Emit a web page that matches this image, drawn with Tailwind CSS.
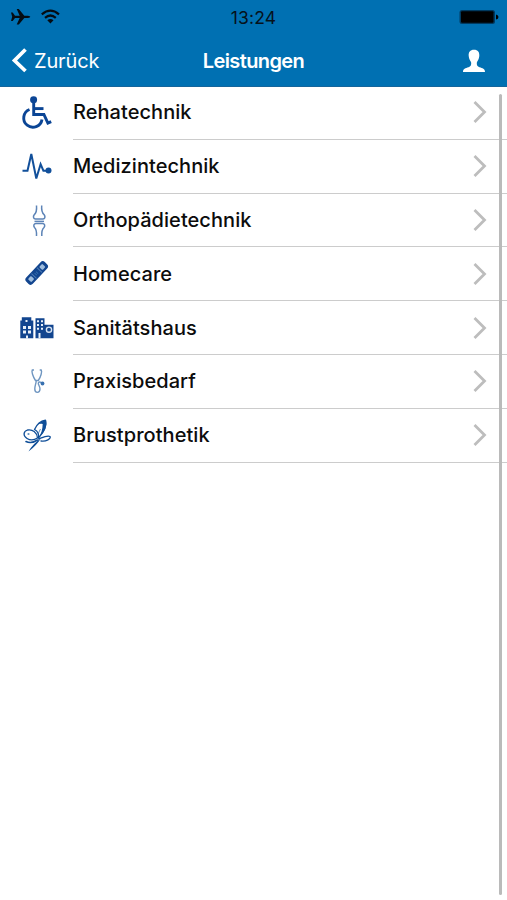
<!DOCTYPE html>
<html lang="de">
<head>
<meta charset="utf-8">
<title>Leistungen</title>
<script src="https://cdn.jsdelivr.net/npm/@tailwindcss/browser@4"></script>
</head>
<body class="relative h-[900px] w-[507px] overflow-hidden bg-white font-['Inter','Liberation_Sans',sans-serif] text-[#111]">
<header class="h-[87px] border-b border-[#15659b] bg-[#0070b2]">
  <div class="grid h-[34px] grid-cols-3 items-center">
    <svg class="h-[34px] w-[70px]" viewBox="0 0 70 34">
      <path d="M11 12.5h1.700l2.300 3.200h4.700L16.700 9h2.100l5.500 6.700h3.700q2.300.3 2.300 1.100t-2.300 1.100h-3.700l-5.500 6.600h-2.100l3-6.600h-4.700L12.700 21H11l1.200-4.200z" fill="#050c12"/>
      <g fill="none" stroke="#050c12" stroke-width="2.200"><path d="M41.800 14.300q8.600-7.200 17.200 0"/><path d="M45 17.800q5.400-4.600 10.800 0"/></g>
      <path d="M47.300 20.200q3.100-2.300 6.200 0L50.400 23.500z" fill="#050c12"/>
    </svg>
    <span class="pt-px text-center text-[17.500px] leading-[33px] tracking-[0.2px] text-[#06121b]">13:24</span>
    <svg class="h-[34px] w-[50px] justify-self-end" viewBox="457 0 50 34"><rect x="459.500" y="10" width="35.500" height="14" rx="2.500" fill="#003a60"/><rect x="461" y="11.300" width="32.500" height="11.500" rx="1"/><path d="M496 14.500q2.500.5 2.500 2.500t-2.500 2.500z"/></svg>
  </div>
  <div class="grid h-[52px] grid-cols-3 items-center text-white">
    <div class="flex h-[52px] items-center">
      <svg class="h-[52px] w-[34px]" viewBox="0 34 34 52"><path d="M25.500 49.500L14.500 60.500L25.500 71" fill="none" stroke="#fff" stroke-width="3.700"/></svg>
      <span class="pt-[2px] text-[20px] tracking-[-0.15px]">Zurück</span>
    </div>
    <span class="pt-[2px] text-center text-[20px] font-semibold tracking-[-0.6px]">Leistungen</span>
    <svg class="h-[52px] w-[50px] justify-self-end" viewBox="457 34 50 52"><path d="M474 49.700c4 0 5.600 2.500 5.300 6.200-.2 2.900-1.600 4.700-2.400 6.400-.5 2.800.4 4 2.600 5 3 1 5.500 1.500 5.500 4.700h-22c0-3.200 2.500-3.700 5.500-4.700 2.200-1 3.100-2.200 2.600-5-.8-1.700-2.200-3.500-2.400-6.400-.3-3.700 1.300-6.200 5.300-6.200z" fill="#fff"/></svg>
  </div>
</header>
<ul class="-mt-px text-[20px] text-[#0c0c0c]">
  <li class="flex h-[53.8px] items-center">
    <svg class="h-[53.8px] w-[73px] shrink-0" viewBox="0 0 73 53.8"><g fill="none" stroke="#0b4595" stroke-width="2.900"><path d="M33.700 16v12.500h10.200l4 8.600 3.300-1.500"/><path d="M34 22.600h9.500"/><path d="M29.500 23.500A9.200 9.200 0 1 0 42 33.500"/></g><circle cx="33.600" cy="13.700" r="3.500" fill="#0b4595"/></svg>
    <div class="flex h-full flex-1 items-center justify-between border-b-[1.500px] border-[#ccc] pr-[19px]"><span class="font-medium tracking-[0.05px]">Rehatechnik</span><svg class="h-6 w-4" viewBox="0 0 16 24"><path d="M2.500 2L12.500 12L2.500 22" fill="none" stroke="#bdbdbd" stroke-width="2.800"/></svg></div>
  </li>
  <li class="flex h-[53.8px] items-center">
    <svg class="h-[53.8px] w-[73px] shrink-0" viewBox="0 0 73 53.8"><path d="M22.500 30.700h5L31.300 14l5 24.500 4.300-14.300 2.800 6.500h5" fill="none" stroke="#12509b" stroke-width="2"/><circle cx="48.500" cy="30.500" r="3" fill="#12509b"/></svg>
    <div class="flex h-full flex-1 items-center justify-between border-b-[1.500px] border-[#ccc] pr-[19px]"><span class="font-medium tracking-[0.05px]">Medizintechnik</span><svg class="h-6 w-4" viewBox="0 0 16 24"><path d="M2.500 2L12.500 12L2.500 22" fill="none" stroke="#bdbdbd" stroke-width="2.800"/></svg></div>
  </li>
  <li class="flex h-[53.8px] items-center">
    <svg class="h-[53.8px] w-[73px] shrink-0" viewBox="0 0 73 53.8"><g fill="none" stroke="#5d84b7" stroke-width="1.500"><path d="M36.500 11.500c.4 4.500.3 7-2.300 9.300-1.500 2-.6 4.400 1.500 4.200h7c2.100.2 3-2.200 1.500-4.200-2.600-2.300-2.900-4.800-2.500-9.300"/><path d="M34.500 27.400h9.500"/><path d="M36.500 42c.3-4.500.2-6.500-2-8.500-1.500-2-.5-4 1.500-4h6.500c2 0 3 2 1.500 4-2.200 2-2.500 4-2.200 8.500"/></g></svg>
    <div class="flex h-full flex-1 items-center justify-between border-b-[1.500px] border-[#ccc] pr-[19px]"><span class="font-medium tracking-[0.05px]">Orthopädietechnik</span><svg class="h-6 w-4" viewBox="0 0 16 24"><path d="M2.500 2L12.500 12L2.500 22" fill="none" stroke="#bdbdbd" stroke-width="2.800"/></svg></div>
  </li>
  <li class="flex h-[53.8px] items-center">
    <svg class="h-[53.8px] w-[73px] shrink-0" viewBox="0 0 73 53.8"><g transform="translate(36.700 26) rotate(-47)"><rect x="-13.500" y="-4.500" width="27" height="9" rx="3" fill="#12458f"/><rect x="-10.500" y="-2.300" width="4.500" height="4.600" rx="1" fill="#9dbbdc"/><rect x="6" y="-2.300" width="4.500" height="4.600" rx="1" fill="#9dbbdc"/><path d="M-4-3.500v7M4-3.500v7" stroke="#4f7db4" stroke-width="1"/><path d="M-2 0h4" stroke="#326aab" stroke-width="3" stroke-dasharray="1 1"/></g></svg>
    <div class="flex h-full flex-1 items-center justify-between border-b-[1.500px] border-[#ccc] pr-[19px]"><span class="font-medium tracking-[0.05px]">Homecare</span><svg class="h-6 w-4" viewBox="0 0 16 24"><path d="M2.500 2L12.500 12L2.500 22" fill="none" stroke="#bdbdbd" stroke-width="2.800"/></svg></div>
  </li>
  <li class="flex h-[53.8px] items-center">
    <svg class="h-[53.8px] w-[73px] shrink-0" viewBox="0 0 73 53.8"><path d="M20.300 37.300V19.500h1.500v-3.300h9.500v3.300h2v17.800zM35.500 37.300V17.300h9v6.500h9v13.500z" fill="#12458f"/><g fill="#e8f0f9"><path d="M25.500 19h2v2h-2zM23 25h3v3h-3zM28 25h3v3h-3zM23 29.500h3v3h-3zM28 29.500h3v3h-3zM26 34.500h2v3h-2z"/><path d="M37 19.300h2v2h-2zM41 19.300h2v2h-2zM37 23h2v2h-2zM41 23h2v2h-2zM37 26.700h2v2h-2zM41 26.700h2v2h-2zM38.500 32h2v5.300h-2z"/></g><circle cx="49" cy="28.700" r="2.600" fill="#12458f" stroke="#d6e3f2" stroke-width="1.400"/></svg>
    <div class="flex h-full flex-1 items-center justify-between border-b-[1.500px] border-[#ccc] pr-[19px]"><span class="font-medium tracking-[0.05px]">Sanitätshaus</span><svg class="h-6 w-4" viewBox="0 0 16 24"><path d="M2.500 2L12.500 12L2.500 22" fill="none" stroke="#bdbdbd" stroke-width="2.800"/></svg></div>
  </li>
  <li class="flex h-[53.8px] items-center">
    <svg class="h-[53.8px] w-[73px] shrink-0" viewBox="0 0 73 53.8"><g fill="none" stroke="#6f96c1" stroke-width="1.400"><path d="M34 15h-1.700c-1 1.500.5 6.500 3.200 10.500h2.800c2.500-3.500 4-9 2.900-10.500h-1.500"/><path d="M36.300 25.500c-.4 4-1.500 5-1.500 8.500 0 4.500 5 4.500 5.200 0 .1-3-2-4-1.700-6 .2-1.200 1.500-1.200 3.200-.3"/></g><circle cx="42.500" cy="28.500" r="1.900" fill="#3971b0"/></svg>
    <div class="flex h-full flex-1 items-center justify-between border-b-[1.500px] border-[#ccc] pr-[19px]"><span class="font-medium tracking-[0.05px]">Praxisbedarf</span><svg class="h-6 w-4" viewBox="0 0 16 24"><path d="M2.500 2L12.500 12L2.500 22" fill="none" stroke="#bdbdbd" stroke-width="2.800"/></svg></div>
  </li>
  <li class="flex h-[53.8px] items-center">
    <svg class="h-[53.8px] w-[73px] shrink-0" viewBox="0 0 73 53.8"><g fill="none" stroke="#0f4e98" stroke-width="1.300" stroke-linecap="round" stroke-linejoin="round"><path d="M37.500 29C37 23.500 32.500 20 27.500 21c-4.500 1.500-4.500 6-.5 8.500 3 1.800 7.500 1.500 10.500-.5z"/><path d="M34.500 20.500C37 15 41 12 45.500 11.200 47 17 45 22 38.500 29c.5-4-1-7-4-8.500z"/><path d="M38.500 30c4-1.500 9-4 11.500-2.500 1.500 2-4 5.500-9 4.500"/><path d="M26 32.500c3 1.500 7 1.500 11.500-1.500" stroke-width="1.600"/></g><path d="M38 15.500C41 12.500 43.500 11.500 46 11c1.500 6-1 11.500-7.500 18 3-5 4-8.500 4.200-14-2-.6-3.200-.3-4.700.5zM41 29.200Q36.500 36.500 28.500 42.500 32.500 35 41 29.200z" fill="#0f4e98"/><path d="M38.500 24l2-4" stroke="#5c8dc1"/><circle cx="28.500" cy="25" r="1.100" fill="#5c8dc1"/></svg>
    <div class="flex h-full flex-1 items-center justify-between border-b-[1.500px] border-[#ccc] pr-[19px]"><span class="font-medium tracking-[0.05px]">Brustprothetik</span><svg class="h-6 w-4" viewBox="0 0 16 24"><path d="M2.500 2L12.500 12L2.500 22" fill="none" stroke="#bdbdbd" stroke-width="2.800"/></svg></div>
  </li>
</ul>
<div class="absolute top-[94px] left-[498.500px] h-[801px] w-[3.500px] rounded-full bg-[#bababa]"></div>
</body>
</html>
